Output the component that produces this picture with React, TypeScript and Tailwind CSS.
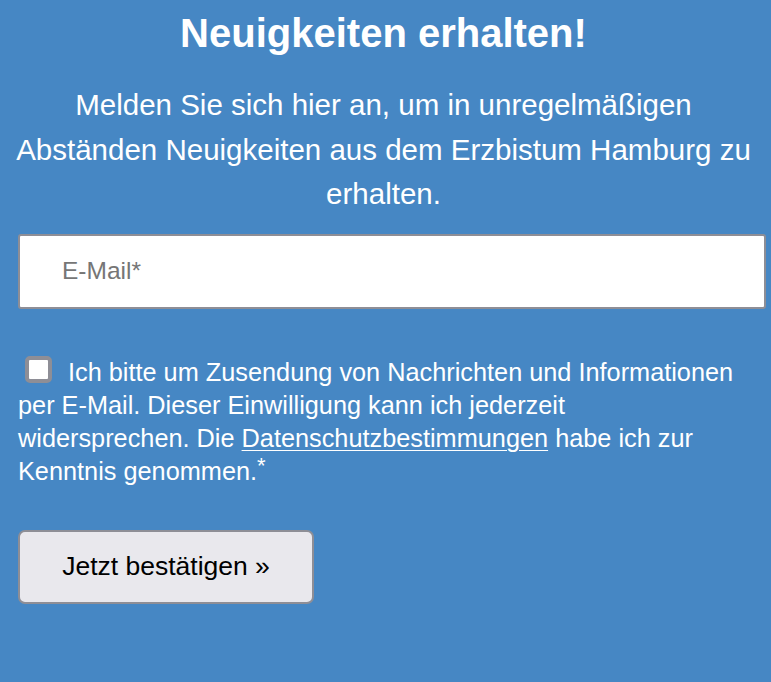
import { useState } from "react";

export default function App() {
  const [checked, setChecked] = useState(false);

  return (
    <div className="min-h-[682px] w-full bg-[#4687c4] text-white font-['Liberation_Sans',Arial,sans-serif]">
      <div className="pl-[8px] pr-[12px] pt-[9px] text-center">
        <h1 className="text-[40px] font-bold leading-[48px]">Neuigkeiten erhalten!</h1>
        <p className="mt-[26px] text-[29.5px] leading-[44.5px]">
          Melden Sie sich hier an, um in unregelmäßigen Abständen Neuigkeiten aus dem Erzbistum Hamburg zu erhalten.
        </p>
      </div>

      <div className="pl-[18px] pr-[5px]">
        <input
          type="email"
          placeholder="E-Mail*"
          className="mt-[17px] block h-[75px] w-full rounded-[3px] border-2 border-[#8e8e96] bg-white px-[42px] text-[24.5px] text-black placeholder:text-[#767676] outline-none"
        />

        <label className="mt-[45px] mr-[27px] block text-[25.3px] leading-[33px]">
          <input
            type="checkbox"
            checked={checked}
            onChange={(e) => setChecked(e.target.checked)}
            className="relative top-[2px] ml-[7px] mr-[16px] inline-block h-[27px] w-[27px] appearance-none rounded-[5px] border-4 border-[#8e8e96] bg-white align-baseline checked:bg-[#1f6feb]"
          />
          Ich bitte um Zusendung von Nachrichten und Informationen per E‑Mail. Dieser Einwilligung kann ich jederzeit widersprechen. Die{" "}
          <a href="#" className="underline underline-offset-[3px] decoration-1">Datenschutzbestimmungen</a>{" "}
          habe ich zur Kenntnis genommen.<span className="relative -top-[7px] inline-block text-[22px] leading-[0]">*</span>
        </label>

        <button
          type="button"
          className="mt-[42px] block h-[74px] w-[296px] rounded-[7px] border-2 border-[#8e8e96] bg-[#e9e8ed] text-[26.5px] text-black"
        >
          Jetzt bestätigen »
        </button>
      </div>
    </div>
  );
}
